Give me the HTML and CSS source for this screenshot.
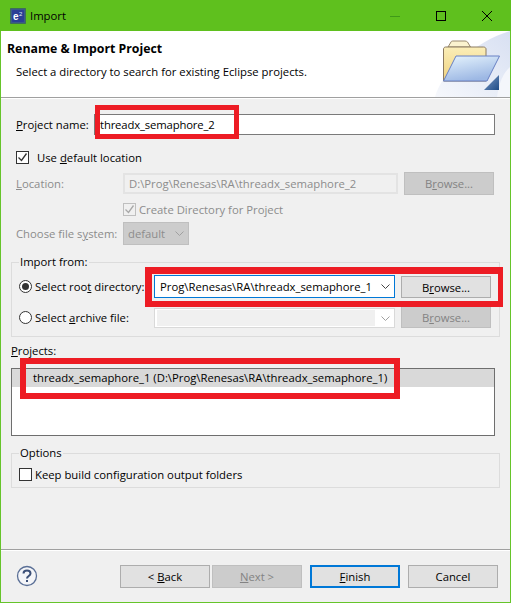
FILE: index.html
```html
<!DOCTYPE html>
<html lang="en">
<head>
    <meta charset="UTF-8">
    <title>Import</title>
    <link rel="stylesheet" href="styles.css">
</head>
<body>
    <div class="window">
        <div class="titlebar">
            <svg class="app-icon" width="16" height="16" viewBox="0 0 16 16">
                <rect x="0.500" y="0.500" width="15" height="15" fill="#3a5a8a" stroke="#2f4f5f" stroke-dasharray="1 1"/>
                <rect x="2" y="2" width="12" height="12" rx="1" fill="#2b3f96"/>
                <text x="3" y="12" class="icon-letter">e</text>
                <text x="9" y="8" class="icon-sup">2</text>
            </svg>
            <span class="title-text">Import</span>
            <div class="win-controls">
                <svg width="12" height="12" viewBox="0 0 12 12"><path d="M1 6.500h10" stroke="#3f9a18"/></svg>
                <svg width="12" height="12" viewBox="0 0 12 12"><rect x="1.500" y="1.500" width="9" height="9" fill="none" stroke="#000"/></svg>
                <svg width="12" height="12" viewBox="0 0 12 12"><path d="M1 1l10 10M11 1L1 11" stroke="#000" fill="none"/></svg>
            </div>
        </div>

        <div class="header">
            <div class="header-text">
                <h1>Rename &amp; Import Project</h1>
                <p>Select a directory to search for existing Eclipse projects.</p>
            </div>
            <svg class="wizard-art" width="75" height="66" viewBox="0 0 75 66">
                <defs>
                    <linearGradient id="sweep" x1="0" y1="1" x2="1" y2="0">
                        <stop offset="0" stop-color="#f6f8fc"/>
                        <stop offset="1" stop-color="#d8e0f2"/>
                    </linearGradient>
                    <linearGradient id="back" x1="0" y1="0" x2="0" y2="1">
                        <stop offset="0" stop-color="#fbeeb8"/>
                        <stop offset="1" stop-color="#efd27f"/>
                    </linearGradient>
                    <linearGradient id="front" x1="0" y1="0" x2="0.4" y2="1">
                        <stop offset="0" stop-color="#e6f4fd"/>
                        <stop offset="1" stop-color="#9db8e4"/>
                    </linearGradient>
                    <linearGradient id="corner" x1="0" y1="0" x2="1" y2="1">
                        <stop offset="0" stop-color="#7f9cc8"/>
                        <stop offset="1" stop-color="#1f4c86"/>
                    </linearGradient>
                </defs>
                <path d="M0 66C6 42 40 10 75 0V66Z" fill="url(#sweep)"/>
                <path d="M62 66C64 52 68 42 75 36V66Z" fill="#f4f6fb"/>
                <path d="M13 16l3-5c0-.5 1-1 2-1h12c1 0 2 .5 2.500 1l3 5Z" fill="#fbf3cf" stroke="#9a8a70"/>
                <path d="M8.500 18c0-1 1-2 2-2h38c1.500 0 2.500 1 2.500 2v32H8.500Z" fill="url(#back)" stroke="#8b7a60"/>
                <path d="M21 25H64.500L52 50H8.500Z" fill="url(#front)" stroke="#6880c4" stroke-linejoin="round"/>
                <path d="M64 44V59H49Z" fill="url(#corner)"/>
            </svg>
        </div>

        <div class="content">
            <div class="name-row">
                <label class="field-label"><u>P</u>roject name:</label>
                <div class="text-input name-input">threadx_semaphore_2</div>
            </div>

            <div class="check-row default-loc">
                <span class="checkbox"><svg width="11" height="11" viewBox="0 0 11 11"><path d="M1.500 5.500l3 3 5-7" fill="none" stroke="#333" stroke-width="1.300"/></svg></span>
                <span>Use <u>d</u>efault location</span>
            </div>

            <div class="location-row">
                <label class="field-label disabled-text"><u>L</u>ocation:</label>
                <div class="text-input location-input disabled-text">D:\Prog\Renesas\RA\threadx_semaphore_2</div>
                <button class="btn btn-off loc-browse">B<u>r</u>owse...</button>
            </div>

            <div class="check-row create-dir disabled-text">
                <span class="checkbox checkbox-off"><svg width="11" height="11" viewBox="0 0 11 11"><path d="M1.500 5.500l3 3 5-7" fill="none" stroke="#a8a8a8" stroke-width="1.300"/></svg></span>
                <span>Create Directory for Project</span>
            </div>

            <div class="fs-row">
                <label class="field-label disabled-text">Choose file s<u>y</u>stem:</label>
                <div class="fs-select disabled-text">default
                    <svg width="9" height="5" viewBox="0 0 9 5"><path d="M.5 .5l4 4 4-4" fill="none" stroke="#a0a0a0"/></svg>
                </div>
            </div>

            <fieldset class="group import-group">
                <legend>Import from:</legend>
                <div class="import-row">
                    <span class="radio radio-on"></span>
                    <span class="import-label">Select roo<u>t</u> directory:</span>
                    <div class="combo combo-active">
                        <span class="combo-text">Prog\Renesas\RA\threadx_semaphore_1</span>
                        <svg width="9" height="5" viewBox="0 0 9 5"><path d="M.5 .5l4 4 4-4" fill="none" stroke="#444"/></svg>
                    </div>
                    <button class="btn row-btn-low">B<u>r</u>owse...</button>
                </div>
                <div class="import-row">
                    <span class="radio"></span>
                    <span class="import-label">Select <u>a</u>rchive file:</span>
                    <div class="combo combo-off">
                        <span class="combo-fill"></span>
                        <svg width="9" height="5" viewBox="0 0 9 5"><path d="M.5 .5l4 4 4-4" fill="none" stroke="#a0a0a0"/></svg>
                    </div>
                    <button class="btn btn-off row-btn-high">B<u>r</u>owse...</button>
                </div>
            </fieldset>

            <div class="projects-label"><u>P</u>rojects:</div>
            <div class="project-list">
                <div class="project-item">threadx_semaphore_1 (D:\Prog\Renesas\RA\threadx_semaphore_1)</div>
            </div>

            <fieldset class="group options-group">
                <legend>Options</legend>
                <div class="check-row">
                    <span class="checkbox"></span>
                    <span>Keep build configuration output folders</span>
                </div>
            </fieldset>
        </div>

        <div class="footer">
            <svg class="help" width="22" height="22" viewBox="0 0 22 22">
                <circle cx="11" cy="11" r="9.500" fill="#f4f5f8" stroke="#5a6f96" stroke-width="1.300"/>
                <path d="M7.500 8.500c0-2 1.500-3 3.500-3s3.500 1 3.500 3c0 2.500-3.500 2.500-3.500 5" fill="none" stroke="#3c5078" stroke-width="2"/>
                <rect x="10" y="15" width="2" height="2" fill="#3c5078"/>
            </svg>
            <div class="footer-buttons">
                <div class="nav-group">
                    <button class="btn">&lt; <u>B</u>ack</button>
                    <button class="btn btn-off"><u>N</u>ext &gt;</button>
                </div>
                <button class="btn btn-default"><u>F</u>inish</button>
                <button class="btn">Cancel</button>
            </div>
        </div>

        <!-- red annotations on top of the screenshot -->
        <div class="mark mark-name"></div>
        <div class="mark mark-root"></div>
        <div class="mark mark-projects"></div>
    </div>
</body>
</html>
```

FILE: styles.css
```css
* {
    box-sizing: border-box;
}

html, body {
    margin: 0;
    padding: 0;
}

body {
    width: 511px;
    height: 603px;
    overflow: hidden;
    font-family: "Open Sans", "Noto Sans", sans-serif;
    font-size: 11.3px;
    color: #000;
}

.window {
    position: relative;
    width: 511px;
    height: 603px;
    background: #f0f0f0;
    border: 1px solid #66c42a;
    border-top: none;
    display: flex;
    flex-direction: column;
}

.titlebar {
    height: 31px;
    margin: 0 -1px;
    background: #5fc01e;
    display: flex;
    align-items: center;
    padding-left: 10px;
}

.app-icon {
    flex: none;
}

.icon-letter {
    font-family: "Liberation Sans", sans-serif;
    font-size: 10px;
    font-weight: 700;
    fill: #fff;
}

.icon-sup {
    font-family: "Liberation Sans", sans-serif;
    font-size: 6px;
    fill: #dfe8ff;
}

.title-text {
    margin-left: 4px;
}

.win-controls {
    margin-left: auto;
    display: flex;
    gap: 34px;
    padding-right: 18px;
}

.header {
    height: 67px;
    background: #fff;
    border-bottom: 1px solid #a0a0a0;
    display: flex;
    justify-content: space-between;
    align-items: flex-end;
}

.header-text {
    align-self: flex-start;
}

.header h1 {
    margin: 10px 0 0 6px;
    font-size: 12.3px;
    font-weight: 700;
    line-height: 16px;
}

.header p {
    margin: 7px 0 0 15px;
    line-height: 16px;
}

.wizard-art {
    flex: none;
}

.content {
    flex: 1;
    border-top: 1px solid #fff;
    padding: 0 10px;
}

u {
    text-underline-offset: 1px;
}

.disabled-text {
    color: #8c8c8c;
}

.field-label {
    display: block;
    flex: none;
    margin-left: 5px;
    white-space: nowrap;
}

.text-input {
    height: 21px;
    background: #fff;
    border: 1px solid #7a7a7a;
    line-height: 19px;
    padding-left: 5px;
    white-space: nowrap;
}

.name-row {
    display: flex;
    align-items: center;
    margin-top: 15px;
}

.name-row .field-label {
    width: 78px;
}

.name-input {
    width: 401px;
    letter-spacing: -0.15px;
}

.check-row {
    display: flex;
    align-items: center;
    gap: 8px;
    height: 14px;
}

.default-loc {
    margin: 15px 0 0 5px;
}

.checkbox {
    width: 13px;
    height: 13px;
    flex: none;
    background: #fff;
    border: 1px solid #333;
    display: flex;
    align-items: center;
    justify-content: center;
}

.checkbox-off {
    border-color: #bfbfbf;
    background: #f0f0f0;
}

.location-row {
    display: flex;
    align-items: center;
    margin-top: 8px;
}

.location-row .field-label {
    width: 107px;
}

.location-input {
    width: 275px;
    background: #f0f0f0;
    border: 2px solid #e3e3e3;
    padding-left: 4px;
    line-height: 17px;
}

.btn {
    width: 90px;
    height: 23px;
    padding: 0;
    background: #e1e1e1;
    border: 1px solid #adadad;
    font: inherit;
    color: #000;
}

.btn-off {
    background: #cccccc;
    border-color: #bfbfbf;
    color: #838383;
}

.loc-browse {
    margin-left: 6px;
}

.create-dir {
    margin: 7px 0 0 112px;
    gap: 3px;
}

.fs-row {
    display: flex;
    align-items: center;
    margin-top: 6px;
}

.fs-row .field-label {
    width: 107px;
}

.fs-select {
    width: 66px;
    height: 23px;
    background: #cccccc;
    border: 1px solid #bfbfbf;
    padding: 0 4px 0 4px;
    display: flex;
    align-items: center;
    justify-content: space-between;
}

.group {
    margin: 0;
    padding: 0 7px;
    border: 1px solid #dcdcdc;
    width: 489px;
    min-width: 0;
}

.group legend {
    padding: 0 1px;
    line-height: 16px;
}

.import-group {
    margin-top: 9px;
    height: 83px;
}

.import-row {
    display: flex;
    align-items: center;
    height: 23px;
    margin-top: 5px;
}

.import-row + .import-row {
    margin-top: 8px;
}

.radio {
    width: 13px;
    height: 13px;
    flex: none;
    border-radius: 50%;
    background: #fff;
    border: 1px solid #333;
    position: relative;
}

.radio-on::after {
    content: "";
    position: absolute;
    top: 2px;
    left: 2px;
    width: 7px;
    height: 7px;
    border-radius: 50%;
    background: #333;
}

.import-label {
    width: 119px;
    flex: none;
    margin-left: 3px;
    white-space: nowrap;
}

.combo {
    width: 241px;
    flex: none;
    height: 23px;
    background: #fff;
    display: flex;
    align-items: center;
    justify-content: space-between;
    padding-right: 4px;
    margin-right: 6px;
}

.combo-active {
    border: 1px solid #0078d7;
    padding-left: 5px;
}

.combo-text {
    white-space: nowrap;
}

.combo-off {
    height: 20px;
    align-self: flex-start;
    margin-top: 2px;
    border: 1px solid #d9d9d9;
    padding: 1px 4px 1px 2px;
}

.combo-fill {
    width: 218px;
    height: 100%;
    background: #f0f0f0;
}

.row-btn-low {
    height: 22px;
    align-self: flex-end;
}

.row-btn-high {
    height: 22px;
    align-self: flex-start;
}

.projects-label {
    margin-top: 6px;
    line-height: 16px;
}

.project-list {
    width: 484px;
    height: 68px;
    margin-top: 9px;
    background: #fff;
    border: 1px solid #6e6e6e;
}

.project-item {
    height: 18px;
    background: #d9d9d9;
    line-height: 18px;
    padding-left: 21px;
    white-space: nowrap;
}

.options-group {
    margin-top: 9px;
    height: 43px;
}

.options-group .check-row {
    gap: 3px;
    margin-top: 6px;
}

.footer {
    height: 53px;
    border-top: 1px solid #a0a0a0;
    box-shadow: inset 0 1px 0 #fff;
    display: flex;
    align-items: center;
    padding: 0 12px 0 15px;
    justify-content: space-between;
}

.footer-buttons {
    display: flex;
    gap: 8px;
}

.nav-group {
    display: flex;
    gap: 2px;
}

.btn-default {
    border: 2px solid #0078d7;
}

.mark {
    position: absolute;
    border-style: solid;
    border-color: #ed1c24;
    pointer-events: none;
}

.mark-name {
    left: 94px;
    top: 105px;
    width: 144px;
    height: 34px;
    border-width: 5px;
}

.mark-root {
    left: 144px;
    top: 267px;
    width: 358px;
    height: 40px;
    border-width: 7px 5px 6px 7px;
}

.mark-projects {
    left: 19px;
    top: 358px;
    width: 380px;
    height: 41px;
    border-width: 6px;
}
```
